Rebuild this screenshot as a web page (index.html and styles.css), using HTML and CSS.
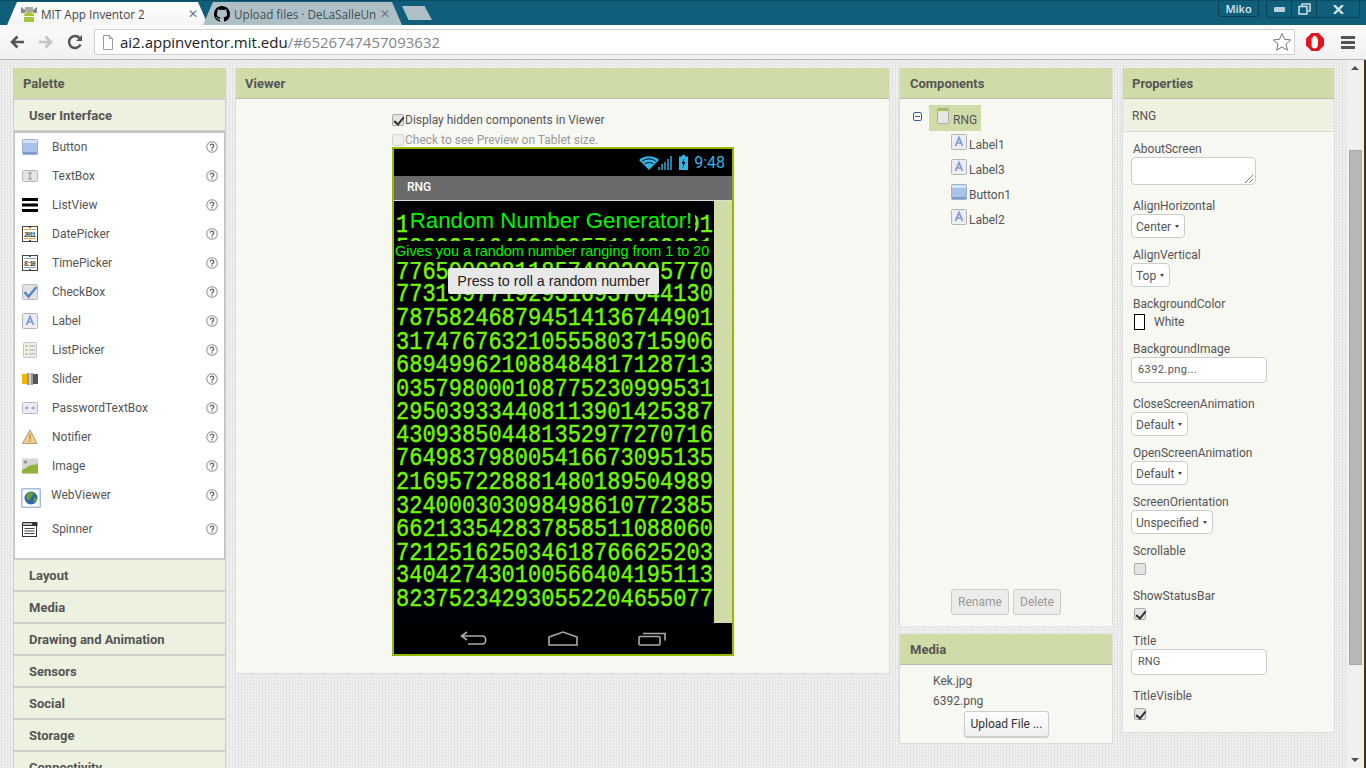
FILE: index.html
```html
<!DOCTYPE html>
<html lang="en">

<head>
    <meta charset="utf-8">
    <title>MIT App Inventor 2</title>
    <link rel="stylesheet" href="styles.css">
</head>

<body>
    <svg class="sprite" width="0" height="0">
        <symbol id="i-button" viewBox="0 0 16 16"><rect x=".5" y=".5" width="15" height="15" rx="1" fill="#a9c2e8" stroke="#9db0cc"/><path d="M1 1h14v3H1z" fill="#d5e2f5"/><path d="M1 13h14v2H1z" fill="#7d9ccd"/></symbol>
        <symbol id="i-textbox" viewBox="0 0 16 16"><rect x=".5" y="2.500" width="15" height="11" rx="1" fill="#e4e4e4" stroke="#b5b5b5"/><path d="M6 5h4M6 11h4M8 5v6" stroke="#7f93b8" fill="none"/></symbol>
        <symbol id="i-listview" viewBox="0 0 16 16"><path d="M0 1h16v3H0zM0 6.500h16v3H0zM0 12h16v3H0z"/></symbol>
        <symbol id="i-date" viewBox="0 0 16 16"><rect x=".5" y=".5" width="15" height="15" fill="#fff" stroke="#444"/><path d="M2 3.500h12M2 12.500h12" stroke="#e9a64c"/><path d="M7 1.500h2M7 14.500h2" stroke="#555"/><text x="8" y="10.500" font-family="Liberation Mono" font-size="6.500" font-weight="700" text-anchor="middle" textLength="12" fill="#444">2011</text></symbol>
        <symbol id="i-time" viewBox="0 0 16 16"><rect x=".5" y=".5" width="15" height="15" fill="#fff" stroke="#444"/><path d="M2 3.500h12M2 12.500h12" stroke="#7ba7d4"/><path d="M7 1.500h2M7 14.500h2" stroke="#555"/><text x="8" y="10.500" font-family="Liberation Mono" font-size="6.500" font-weight="700" text-anchor="middle" textLength="12" fill="#444">8:10</text></symbol>
        <symbol id="i-check" viewBox="0 0 16 16"><rect x=".5" y=".5" width="15" height="15" rx="1" fill="#e2e2e2" stroke="#bbb"/><path d="M2.500 8l4 4.500L14.500 3" fill="none" stroke="#5c86c6" stroke-width="2.600"/></symbol>
        <symbol id="i-label" viewBox="0 0 16 16"><rect x=".5" y=".5" width="15" height="15" rx="1" fill="#ececf2" stroke="#b5b5b5"/><path d="M4.500 12L8 3.500 11.500 12M5.800 9h4.400" fill="none" stroke="#7d9bd0" stroke-width="1.700"/></symbol>
        <symbol id="i-listpicker" viewBox="0 0 16 16"><rect x="1.500" y=".5" width="13" height="15" rx="1" fill="#eee" stroke="#c4c4c4"/><path d="M3.500 4h2M3.500 8h2M3.500 12h2" stroke="#a8c43c" stroke-width="1.500"/><path d="M7 4h6M7 8h6M7 12h6" stroke="#aaa"/></symbol>
        <symbol id="i-slider" viewBox="0 0 16 16"><path d="M0 3h5v10H0z" fill="#f2b400"/><path d="M11 3h5v10h-5z" fill="#555"/><path d="M5 2h6v12H5z" fill="#999"/><path d="M7 2h2v12H7z" fill="#ccc"/></symbol>
        <symbol id="i-password" viewBox="0 0 16 16"><rect x=".5" y="2.500" width="15" height="11" rx="1" fill="#ececf2" stroke="#b9b9b9"/><path d="M3 8h3.500M4.700 6.300v3.400M9.500 8H13M11.200 6.300v3.400" stroke="#7d9bd0"/></symbol>
        <symbol id="i-notifier" viewBox="0 0 16 16"><path d="M8 1l7 13.500H.5z" fill="#f3cd8b" stroke="#a99a7a"/><path d="M8 5v5.500M8 11.500v1.500" stroke="#c58b2f" stroke-width="1.500"/></symbol>
        <symbol id="i-image" viewBox="0 0 16 16"><rect width="16" height="15" y=".5" fill="#d6d6d6"/><circle cx="3.500" cy="4" r="1.500" fill="#888"/><path d="M0 12c4-1 6-5 10-5 3 0 4-1 6-2v10.500H0z" fill="#8fb339"/></symbol>
        <symbol id="i-web" viewBox="0 0 20 20"><rect x=".75" y=".75" width="18.500" height="18.500" rx="1" fill="#fff" stroke="#a3bde0" stroke-width="1.500"/><circle cx="10" cy="10" r="6.500" fill="#2c69a8"/><path d="M6 6c2-2 5-2 6-1s-1 3-2 4-1 4-3 3-2-4-1-6zM13 10c1-1 3 0 3 1s-2 3-3 3 0-3 0-4z" fill="#6ba32d"/></symbol>
        <symbol id="i-spinner" viewBox="0 0 16 16"><rect x=".5" y="4.500" width="14" height="11" fill="#fff" stroke="#333"/><path d="M.5 1.500h10v3H.5z" fill="#bbb" stroke="#333"/><path d="M10.500 1h5v4h-5z" fill="#2e3440"/><path d="M2.500 7.500h10M2.500 10h10M2.500 12.500h10" stroke="#444"/></symbol>
        <symbol id="i-help" viewBox="0 0 12 12"><circle cx="6" cy="6" r="5.250" fill="#fff" stroke="#b0b0b0" stroke-width="1.500"/><path d="M4.300 4.800c0-2.200 3.500-2.200 3.500 0 0 1.300-1.800 1.300-1.800 2.600M6 8.300v1.200" fill="none" stroke="#666" stroke-width="1.300"/></symbol>
        <symbol id="i-screen" viewBox="0 0 12 16"><rect x=".5" y=".5" width="11" height="15" rx="1" fill="#e6e6e6" stroke="#aaa"/><path d="M1 1h10v2H1z" fill="#a4c639"/></symbol>
    </svg>

    <div class="tabstrip">
        <div class="tab tab-active">
            <svg class="favicon" viewBox="0 0 16 16"><path d="M0 1l4 3v3H0z" fill="#888"/><path d="M16 1l-4 3v3h4z" fill="#888"/><path d="M4 1h8v5H4z" fill="#aaa"/><path d="M3 10c0-3 2-4 5-4s5 1 5 4z" fill="#a4c639"/><path d="M3 11h10v5H3z" fill="#a4c639"/></svg>
            <span class="tab-title">MIT App Inventor 2</span>
            <span class="tab-x">✕</span>
        </div>
        <div class="tab tab-other">
            <svg class="favicon" viewBox="0 0 16 16"><path d="M8 0C3.580 0 0 3.580 0 8c0 3.540 2.290 6.530 5.470 7.590.4.070.55-.17.55-.38 0-.19-.01-.82-.01-1.490-2.010.37-2.530-.49-2.690-.94-.09-.23-.48-.94-.82-1.130-.28-.15-.68-.52-.01-.53.63-.01 1.080.58 1.230.82.72 1.210 1.870.87 2.330.66.070-.52.28-.87.51-1.070-1.780-.2-3.640-.89-3.640-3.950 0-.87.31-1.590.82-2.150-.08-.2-.36-1.020.08-2.120 0 0 .67-.21 2.200.82.64-.18 1.320-.27 2-.27.68 0 1.360.09 2 .27 1.530-1.040 2.200-.82 2.200-.82.44 1.100.16 1.920.08 2.120.51.56.82 1.270.82 2.150 0 3.070-1.870 3.750-3.650 3.950.29.25.54.73.54 1.480 0 1.070-.01 1.930-.01 2.200 0 .21.15.46.55.38A8.013 8.013 0 0016 8c0-4.420-3.580-8-8-8z"/></svg>
            <span class="tab-title">Upload files · DeLaSalleUn</span>
            <span class="tab-x">✕</span>
        </div>
        <div class="tab-new"></div>
        <div class="window-controls">
            <div class="win-btn win-user">Miko</div>
            <div class="win-group">
                <div class="win-btn win-min"><svg width="11" height="5" viewBox="0 0 11 5"><rect width="11" height="5" rx="1" fill="#b9d0da"/></svg></div>
                <div class="win-btn win-max"><svg width="13" height="12" viewBox="0 0 13 12" fill="none" stroke="#c7dbe3" stroke-width="1.600"><path d="M4 3V1h8v7h-2"/><rect x="1" y="3.500" width="8" height="7.500"/></svg></div>
                <div class="win-btn win-close"><svg width="11" height="9" viewBox="0 0 11 9" stroke="#d5e4ea" stroke-width="2.400"><path d="M1 0l9 9M10 0L1 9"/></svg></div>
            </div>
        </div>
    </div>

    <div class="toolbar">
        <svg class="tool-icon" viewBox="0 0 16 16" fill="none" stroke="#555" stroke-width="2.600"><path d="M15 8H3M8.500 2.500L3 8l5.500 5.500"/></svg>
        <svg class="tool-icon" viewBox="0 0 16 16" fill="none" stroke="#c4c4c4" stroke-width="2.600"><path d="M1 8h12M7.500 2.500L13 8l-5.500 5.500"/></svg>
        <svg class="tool-icon" viewBox="0 0 16 16" fill="none" stroke="#555" stroke-width="2.500"><path d="M13.500 10.500A6 6 0 1 1 12.500 4"/><path d="M15 1v6H9z" fill="#555" stroke="none"/></svg>
        <div class="omnibox">
            <svg class="doc-icon" viewBox="0 0 12 15" fill="#fff" stroke="#999"><path d="M1.500.5h6l3 3v11h-9z"/><path d="M7.500.5v3h3" fill="none"/></svg>
            <span class="url"><b>ai2.appinventor.mit.edu</b>/#6526747457093632</span>
            <svg class="star" viewBox="0 0 20 20" fill="#fff" stroke="#777"><path d="M10 1.500l2.500 5.800 6.300.6-4.800 4.100 1.500 6.200L10 15l-5.500 3.200L6 12 1.200 7.900l6.300-.6z"/></svg>
        </div>
        <svg class="opera" viewBox="0 0 18 18"><path d="M5.500 0h7L18 5.500v7L12.500 18h-7L0 12.500v-7z" fill="#e3141c"/><path d="M5.500 6c0-1 1.200-1 1.200 0V4c0-1 1.300-1 1.300 0V3.300c0-1 1.400-1 1.400 0V4c0-1 1.300-1 1.300 0v2c0-1 1.200-1 1.200 0v6c0 2-1.500 3.500-3.400 3.500S5.500 14 5.500 12z" fill="#fff"/></svg>
        <svg class="menu-icon" viewBox="0 0 14 13" fill="#555"><path d="M0 0h14v3H0zM0 5h14v3H0zM0 10h14v3H0z"/></svg>
    </div>

    <div class="page">
        <div class="panels">
            <section class="panel palette">
                <h3 class="panel-head">Palette</h3>
                <div class="drawer">User Interface</div>
                <ul class="palette-list">
                    <li><svg class="pal-icon"><use href="#i-button"/></svg><span>Button</span><svg class="help"><use href="#i-help"/></svg></li>
                    <li><svg class="pal-icon"><use href="#i-textbox"/></svg><span>TextBox</span><svg class="help"><use href="#i-help"/></svg></li>
                    <li><svg class="pal-icon"><use href="#i-listview"/></svg><span>ListView</span><svg class="help"><use href="#i-help"/></svg></li>
                    <li><svg class="pal-icon"><use href="#i-date"/></svg><span>DatePicker</span><svg class="help"><use href="#i-help"/></svg></li>
                    <li><svg class="pal-icon"><use href="#i-time"/></svg><span>TimePicker</span><svg class="help"><use href="#i-help"/></svg></li>
                    <li><svg class="pal-icon"><use href="#i-check"/></svg><span>CheckBox</span><svg class="help"><use href="#i-help"/></svg></li>
                    <li><svg class="pal-icon"><use href="#i-label"/></svg><span>Label</span><svg class="help"><use href="#i-help"/></svg></li>
                    <li><svg class="pal-icon"><use href="#i-listpicker"/></svg><span>ListPicker</span><svg class="help"><use href="#i-help"/></svg></li>
                    <li><svg class="pal-icon"><use href="#i-slider"/></svg><span>Slider</span><svg class="help"><use href="#i-help"/></svg></li>
                    <li><svg class="pal-icon"><use href="#i-password"/></svg><span>PasswordTextBox</span><svg class="help"><use href="#i-help"/></svg></li>
                    <li><svg class="pal-icon"><use href="#i-notifier"/></svg><span>Notifier</span><svg class="help"><use href="#i-help"/></svg></li>
                    <li><svg class="pal-icon"><use href="#i-image"/></svg><span>Image</span><svg class="help"><use href="#i-help"/></svg></li>
                    <li class="row-web"><svg class="pal-icon-big"><use href="#i-web"/></svg><span>WebViewer</span><svg class="help"><use href="#i-help"/></svg></li>
                    <li class="row-spinner"><svg class="pal-icon"><use href="#i-spinner"/></svg><span>Spinner</span><svg class="help"><use href="#i-help"/></svg></li>
                </ul>
                <div class="drawer">Layout</div>
                <div class="drawer">Media</div>
                <div class="drawer">Drawing and Animation</div>
                <div class="drawer">Sensors</div>
                <div class="drawer">Social</div>
                <div class="drawer">Storage</div>
                <div class="drawer">Connectivity</div>
            </section>

            <section class="panel viewer">
                <h3 class="panel-head">Viewer</h3>
                <div class="viewer-body">
                    <div class="viewer-check"><span class="checkbox is-on"></span>Display hidden components in Viewer</div>
                    <div class="viewer-check is-off"><span class="checkbox"></span>Check to see Preview on Tablet size.</div>
                    <div class="phone">
                        <div class="status-bar">
                            <svg class="status-wifi" viewBox="0 0 20 14"><path d="M10 14L0 4c5.500-5 14.500-5 20 0z" fill="#33b5e5"/><path d="M3 5.500c4-3.500 10-3.500 14 0M5.500 8c2.500-2 6.500-2 9 0" stroke="#000" fill="none"/></svg>
                            <svg class="status-signal" viewBox="0 0 14 14" fill="#2a7f9f"><path d="M0 11h2v3H0zM3 8h2v6H3zM6 6h2v8H6zM9 3h2v11H9zM12 0h2v14h-2z"/></svg>
                            <svg class="status-batt" viewBox="0 0 9 15"><path d="M3 0h3v1.500h3V15H0V1.500h3z" fill="#33b5e5"/><path d="M5.500 3L2.500 8.500h2L3.500 13l3-6h-2z" fill="#000"/></svg>
                            <span class="status-time">9:48</span>
                        </div>
                        <div class="phone-title">RNG</div>
                        <div class="screen">
                            <div class="digits">
                                <div class="digit-rows">
                                    <div>106421857390426815037291</div>
                                    <div>593027164830295716482091</div>
                                    <div>776590028118574802005770</div>
                                    <div>773159771929316937044130</div>
                                    <div>787582468794514136744901</div>
                                    <div>317476763210555803715906</div>
                                    <div>689499621088484817128713</div>
                                    <div>035798000108775230999531</div>
                                    <div>295039334408113901425387</div>
                                    <div>430938504481352977270716</div>
                                    <div>764983798005416673095135</div>
                                    <div>216957228881480189504989</div>
                                    <div>324000303098498610772385</div>
                                    <div>662133542837858511088060</div>
                                    <div>721251625034618766625203</div>
                                    <div>340427430100566404195113</div>
                                    <div>823752342930552204655077</div>
                                </div>
                            </div>
                            <div class="screen-side"></div>
                            <div class="app-title">Random Number Generator!</div>
                            <div class="app-sub">Gives you a random number ranging from 1 to 20</div>
                            <div class="app-button">Press to roll a random number</div>
                        </div>
                        <div class="phone-nav">
                            <svg width="28" height="15" viewBox="0 0 28 15" fill="none" stroke="#aaa" stroke-width="1.600"><path d="M7 1L1.500 5 7 9M1.500 5H22c5 0 5 8 0 8H8"/></svg>
                            <svg width="30" height="15" viewBox="0 0 30 15" fill="none" stroke="#aaa" stroke-width="1.600"><path d="M1 6l14-5 14 5v8H1z"/></svg>
                            <svg width="28" height="15" viewBox="0 0 28 15" fill="none" stroke="#aaa" stroke-width="1.600"><rect x="1" y="5.500" width="21" height="8.500" rx="1"/><path d="M5 2.500h22v7"/></svg>
                        </div>
                    </div>
                </div>
            </section>

            <div class="stack">
                <section class="panel components">
                    <h3 class="panel-head">Components</h3>
                    <div class="components-body">
                        <div class="tree-root">
                            <svg class="tree-minus" viewBox="0 0 9 9" fill="#fff" stroke="#3d55a5"><rect x=".5" y=".5" width="8" height="8" rx="1.500"/><path d="M2 4.500h5"/></svg>
                            <div class="tree-selected"><svg class="tree-screen"><use href="#i-screen"/></svg><span>RNG</span></div>
                        </div>
                        <ul class="tree-list">
                            <li><svg class="tree-icon"><use href="#i-label"/></svg><span>Label1</span></li>
                            <li><svg class="tree-icon"><use href="#i-label"/></svg><span>Label3</span></li>
                            <li><svg class="tree-icon"><use href="#i-button"/></svg><span>Button1</span></li>
                            <li><svg class="tree-icon"><use href="#i-label"/></svg><span>Label2</span></li>
                        </ul>
                        <div class="tree-actions">
                            <span class="btn is-disabled btn-rename">Rename</span>
                            <span class="btn is-disabled btn-delete">Delete</span>
                        </div>
                    </div>
                </section>
                <section class="panel media">
                    <h3 class="panel-head">Media</h3>
                    <div class="media-body">
                        <div class="media-file">Kek.jpg</div>
                        <div class="media-file">6392.png</div>
                        <span class="btn btn-upload">Upload File ...</span>
                    </div>
                </section>
            </div>

            <section class="panel properties">
                <h3 class="panel-head">Properties</h3>
                <div class="props-target">RNG</div>
                <div class="props-body">
                    <div class="prop prop-tall">
                        <div class="prop-name">AboutScreen</div>
                        <div class="textarea"><svg width="8" height="8" viewBox="0 0 8 8" stroke="#777"><path d="M0 8l8-8M4 8l4-4"/></svg></div>
                    </div>
                    <div class="prop">
                        <div class="prop-name">AlignHorizontal</div>
                        <div class="select">Center<i class="caret"></i></div>
                    </div>
                    <div class="prop">
                        <div class="prop-name">AlignVertical</div>
                        <div class="select">Top<i class="caret"></i></div>
                    </div>
                    <div class="prop prop-color">
                        <div class="prop-name">BackgroundColor</div>
                        <div class="color-row"><span class="swatch"></span>White</div>
                    </div>
                    <div class="prop prop-tall">
                        <div class="prop-name">BackgroundImage</div>
                        <div class="text-input is-spaced">6392.png...</div>
                    </div>
                    <div class="prop">
                        <div class="prop-name">CloseScreenAnimation</div>
                        <div class="select">Default<i class="caret"></i></div>
                    </div>
                    <div class="prop">
                        <div class="prop-name">OpenScreenAnimation</div>
                        <div class="select">Default<i class="caret"></i></div>
                    </div>
                    <div class="prop">
                        <div class="prop-name">ScreenOrientation</div>
                        <div class="select">Unspecified<i class="caret"></i></div>
                    </div>
                    <div class="prop prop-tall">
                        <div class="prop-name">Scrollable</div>
                        <span class="checkbox prop-check"></span>
                    </div>
                    <div class="prop prop-tall">
                        <div class="prop-name">ShowStatusBar</div>
                        <span class="checkbox prop-check is-on"></span>
                    </div>
                    <div class="prop prop-tall">
                        <div class="prop-name">Title</div>
                        <div class="text-input">RNG</div>
                    </div>
                    <div class="prop">
                        <div class="prop-name">TitleVisible</div>
                        <span class="checkbox prop-check is-on"></span>
                    </div>
                </div>
            </section>
        </div>

        <div class="scrollbar">
            <i class="arrow-up"></i>
            <div class="thumb"></div>
            <i class="arrow-down"></i>
        </div>
    </div>
</body>

</html>
```

FILE: styles.css
```css
* {
    box-sizing: border-box;
}

body {
    margin: 0;
    width: 1366px;
    height: 768px;
    overflow: hidden;
    display: flex;
    flex-direction: column;
    font-family: Roboto, "Liberation Sans", sans-serif;
    font-size: 12px;
    color: #555;
    background-color: #e9e9e9;
}

ul {
    list-style: none;
    margin: 0;
    padding: 0;
}

.sprite {
    position: absolute;
}

/* browser chrome */
.tabstrip {
    height: 25px;
    flex: none;
    display: flex;
    align-items: flex-end;
    padding-left: 7px;
    background-color: #0f5f7a;
    border-top: 1px solid #0b4c63;
}

.tab {
    height: 23px;
    display: flex;
    align-items: center;
    font-family: "Open Sans", sans-serif;
    font-size: 11.700px;
    clip-path: polygon(0 100%, 10px 0, calc(100% - 10px) 0, 100% 100%);
}

.tab-active {
    width: 201px;
    padding: 0 10px 0 14px;
    color: #444;
    background: linear-gradient(#fff, #f4f4f4);
}

.tab-other {
    width: 199px;
    margin-left: -5px;
    padding: 0 12px 0 11px;
    color: #3f4f55;
    background-color: #aebfc6;
}

.favicon {
    width: 16px;
    height: 16px;
    flex: none;
    margin-right: 4px;
}

.tab-title {
    flex: 1;
    white-space: nowrap;
    overflow: hidden;
}

.tab-x {
    margin-left: 4px;
    font-size: 12px;
    color: #6d7a80;
}

.tab-new {
    width: 30px;
    height: 14px;
    margin: 0 0 5px 0;
    background-color: #aebfc6;
    clip-path: polygon(0 0, 75% 0, 100% 100%, 22% 100%);
}

.window-controls {
    margin-left: auto;
    align-self: flex-start;
    display: flex;
    gap: 7px;
    padding-right: 6px;
}

.win-btn {
    height: 16px;
    display: flex;
    align-items: center;
    justify-content: center;
}

.win-user {
    width: 41px;
    border: 1px solid #0a3e52;
    border-top: 0;
    border-radius: 0 0 4px 4px;
    font-family: "Open Sans", sans-serif;
    font-size: 11px;
    font-weight: 600;
    color: #dfe9ed;
}

.win-group {
    display: flex;
    border: 1px solid #0a3e52;
    border-top: 0;
    border-radius: 0 0 4px 4px;
}

.win-min {
    width: 25px;
    border-right: 1px solid #0a3e52;
}

.win-max {
    width: 25px;
    border-right: 1px solid #0a3e52;
}

.win-close {
    width: 42px;
}

.toolbar {
    height: 35px;
    flex: none;
    display: flex;
    align-items: center;
    padding-left: 9px;
    background: linear-gradient(#fafafa, #f1f1f1);
    border-bottom: 1px solid #b8b8b8;
}

.tool-icon {
    width: 16px;
    height: 16px;
    margin-right: 13px;
}

.omnibox {
    width: 1201px;
    height: 26px;
    margin-left: -2px;
    display: flex;
    align-items: center;
    padding: 0 2px 0 7px;
    background-color: #fff;
    border: 1px solid #cfcfcf;
    border-radius: 2px;
}

.doc-icon {
    width: 12px;
    height: 15px;
    margin-right: 6px;
}

.url {
    flex: 1;
    font-family: "Open Sans", sans-serif;
    font-size: 15px;
    color: #858585;
}

.url b {
    font-weight: 400;
    color: #222;
}

.star {
    width: 20px;
    height: 20px;
}

.opera {
    width: 18px;
    height: 18px;
    margin-left: 11px;
}

.menu-icon {
    width: 14px;
    height: 13px;
    margin-left: 17px;
}

/* page */
.page {
    flex: 1;
    display: flex;
    min-height: 0;
    overflow: hidden;
    background: repeating-conic-gradient(#e3e3e3 0 25%, #f3f3f3 0 50%) 0 0 / 3px 3px;
}

.panels {
    display: grid;
    grid-template-columns: 213px 655px 214px 213px;
    column-gap: 9px;
    align-items: start;
    padding: 8px 0 0 13px;
}

.panel {
    background-color: #f7f8f2;
    border: 1px solid #dcdcdc;
    border-top: 0;
}

.panel-head {
    height: 31px;
    margin: 0;
    padding-left: 10px;
    font-size: 13px;
    font-weight: 700;
    line-height: 32px;
    color: #555;
    background-color: #cfdca8;
    border-bottom: 1px solid #bcbcb0;
}

.palette {
    background-color: #edf1e0;
    border-color: #cfcfcf;
}

.palette .panel-head,
.viewer .panel-head {
    padding-left: 9px;
}

.properties .panel-head {
    padding-left: 9px;
}

.palette .panel-head {
    border-bottom: 2px solid #cfcfcf;
    height: 32px;
}

.drawer {
    height: 32px;
    padding-left: 15px;
    font-size: 13px;
    font-weight: 700;
    line-height: 31px;
    background-color: #edf1e0;
    border-bottom: 2px solid #cfcfcf;
}

.palette-list {
    height: 429px;
    background-color: #fff;
    border: 1px solid #c4c4c4;
    border-top-width: 2px;
    border-bottom: 2px solid #cfcfcf;
    margin-top: -1px;
}

.palette-list li {
    height: 29px;
    display: flex;
    align-items: center;
    padding: 0 6px 0 7px;
}

.palette-list li:first-child {
    margin-top: -1px;
}

.palette-list .row-spinner {
    height: 39px;
}

.pal-icon {
    width: 16px;
    height: 16px;
    flex: none;
    margin-right: 14px;
}

.pal-icon-big {
    width: 20px;
    height: 20px;
    flex: none;
    margin: 6px 10px 0 -1px;
}

.palette-list span {
    flex: 1;
}

.help {
    width: 12px;
    height: 12px;
    flex: none;
}

/* viewer */
.viewer {
    height: 606px;
}

.viewer-body {
    padding: 11px 0 0 156px;
}

.viewer-check {
    height: 20px;
    display: flex;
    align-items: center;
    gap: 1px;
    font-size: 12px;
    color: #555;
}

.viewer-check.is-off {
    color: #9a9a9a;
}

.viewer-check.is-off .checkbox {
    opacity: .45;
}

.checkbox {
    position: relative;
    width: 12px;
    height: 12px;
    flex: none;
    display: block;
    background-color: #e4e4e4;
    border: 1px solid #a9a9a9;
    border-radius: 2px;
}

.checkbox.is-on::after {
    content: "";
    position: absolute;
    left: 3px;
    top: 0;
    width: 4px;
    height: 8px;
    border: solid #333;
    border-width: 0 2px 2px 0;
    transform: rotate(40deg);
}

.phone {
    width: 342px;
    margin-top: -3px;
    background-color: #000;
    border: 2px solid #94ba00;
}

.status-bar {
    height: 27px;
    display: flex;
    align-items: center;
    justify-content: flex-end;
    padding-right: 7px;
    background-color: #000;
}

.status-wifi {
    width: 20px;
    height: 14px;
}

.status-signal {
    width: 14px;
    height: 14px;
    margin-left: -1px;
}

.status-batt {
    width: 9px;
    height: 15px;
    margin-left: 7px;
}

.status-time {
    margin-left: 6px;
    font-size: 16px;
    color: #33b5e5;
}

.phone-title {
    height: 25px;
    padding-left: 13px;
    font-size: 12px;
    font-weight: 500;
    line-height: 23px;
    color: #fff;
    background-color: #6a6a6a;
    border-bottom: 1px solid #ddd;
}

.screen {
    position: relative;
    height: 422px;
    display: flex;
}

.digits {
    width: 320px;
    padding: 13px 0 0 2px;
    overflow: hidden;
    background-color: #000008;
}

/* the picture's digits are taller than any installed mono face */
.digit-rows {
    font-family: "Liberation Mono", monospace;
    font-size: 22px;
    line-height: 19.830px;
    white-space: nowrap;
    color: #70f800;
    -webkit-text-stroke: .4px #70f800;
    transform: scaleY(1.180);
    transform-origin: top left;
}

.screen-side {
    flex: 1;
    background-color: #d0dca8;
}

.app-title {
    position: absolute;
    left: 13px;
    top: 0;
    width: 288px;
    height: 37px;
    font-family: "Liberation Sans", sans-serif;
    font-size: 22.300px;
    line-height: 39px;
    text-align: center;
    white-space: nowrap;
    color: #00f500;
    background-color: #000;
}

.app-sub {
    position: absolute;
    left: 0;
    top: 40px;
    width: 320px;
    height: 21px;
    padding-left: 1px;
    font-family: "Liberation Sans", sans-serif;
    font-size: 14.400px;
    line-height: 21px;
    white-space: nowrap;
    color: #00f500;
    background-color: #000;
}

.app-button {
    position: absolute;
    left: 54px;
    top: 67px;
    width: 211px;
    height: 26px;
    font-family: "Liberation Sans", sans-serif;
    font-size: 14.300px;
    line-height: 26px;
    text-align: center;
    white-space: nowrap;
    color: #222;
    background-color: #e8e8e8;
    border-radius: 2px;
}

.phone-nav {
    height: 31px;
    display: flex;
    align-items: center;
    justify-content: center;
    gap: 60px;
    background-color: #000;
}

/* components + media */
.stack {
    display: flex;
    flex-direction: column;
    gap: 8px;
}

.components {
    height: 558px;
}

.components-body {
    height: 527px;
    display: flex;
    flex-direction: column;
    padding: 6px 0 0 13px;
    background-color: #f7f8f2;
}

.tree-root {
    display: flex;
    align-items: flex-start;
}

.tree-minus {
    width: 9px;
    height: 9px;
    margin-top: 7px;
    flex: none;
}

.tree-selected {
    width: 52px;
    height: 26px;
    margin-left: 7px;
    display: flex;
    padding: 3px 0 0 8px;
    background-color: #cfdca8;
}

.tree-selected span {
    margin: 5px 0 0 4px;
}

.tree-screen {
    width: 12px;
    height: 16px;
    flex: none;
}

.tree-list {
    padding-left: 38px;
}

.tree-list li {
    height: 25px;
    display: flex;
    align-items: flex-start;
    padding-top: 1px;
}

.tree-icon {
    width: 16px;
    height: 16px;
    flex: none;
    margin-top: 2px;
}

.tree-list span {
    margin: 6px 0 0 2px;
}

.tree-actions {
    margin-top: auto;
    display: flex;
    justify-content: center;
    gap: 4px;
    padding: 0 24px 11px 11px;
}

.btn {
    height: 26px;
    display: flex;
    align-items: center;
    justify-content: center;
    background-color: #f4f4f4;
    border: 1px solid #ccc;
    border-radius: 3px;
    box-shadow: 0 1px 1px #ccc;
}

.btn.is-disabled {
    color: #999;
    background-color: #ececea;
    box-shadow: none;
}

.btn-rename {
    width: 58px;
}

.btn-delete {
    width: 48px;
}

.media {
    height: 110px;
}

.media-body {
    padding: 6px 0 0 33px;
}

.media-file {
    height: 20px;
    line-height: 20px;
}

.btn-upload {
    width: 85px;
    margin: 0 0 0 31px;
    color: #333;
    background: linear-gradient(#fff, #eee);
}

/* properties */
.properties {
    height: 665px;
}

.props-target {
    height: 33px;
    padding-left: 9px;
    line-height: 35px;
    background-color: #edf1e0;
    border-bottom: 1px solid #dcdcdc;
}

.props-body {
    padding: 9px 0 0 8px;
}

.prop {
    margin-bottom: 9px;
}

.prop-tall {
    margin-bottom: 13px;
}

.prop-color {
    margin-bottom: 11px;
}

.prop-name {
    height: 16px;
    margin-left: 2px;
    line-height: 16px;
}

.textarea {
    width: 125px;
    height: 28px;
    display: flex;
    align-items: flex-end;
    justify-content: flex-end;
    padding: 0 2px 1px 0;
    background-color: #fff;
    border: 1px solid #ccc;
    border-radius: 4px;
}

.select {
    width: max-content;
    height: 24px;
    display: flex;
    align-items: center;
    gap: 4px;
    padding: 1px 5px 0 4px;
    background-color: #fff;
    border: 1px solid #ccc;
    border-radius: 4px;
}

.caret {
    width: 0;
    height: 0;
    border: 2.500px solid transparent;
    border-top: 3px solid #444;
    border-bottom: 0;
}

.color-row {
    display: flex;
    align-items: center;
    height: 16px;
    margin-top: 2px;
}

.swatch {
    width: 11px;
    height: 16px;
    margin: 0 9px 0 3px;
    background-color: #fff;
    border: 1px solid #000;
}

.text-input {
    width: 136px;
    height: 26px;
    padding-left: 6px;
    font-size: 11px;
    line-height: 24px;
    background-color: #fff;
    border: 1px solid #ccc;
    border-radius: 4px;
}

.text-input.is-spaced {
    letter-spacing: .4px;
}

.prop-check {
    margin: 4px 0 0 3px;
}

/* page scrollbar */
.scrollbar {
    position: relative;
    width: 17px;
    height: 100%;
    margin-left: 12px;
    background-color: #f0f0f0;
}

.thumb {
    position: absolute;
    left: 2px;
    top: 90px;
    width: 13px;
    height: 515px;
    background-color: #b7b7b7;
    border: 1px solid #a8a8a8;
}

.arrow-up,
.arrow-down {
    position: absolute;
    left: 4px;
    border: 4px solid transparent;
    border-left-width: 4.500px;
    border-right-width: 4.500px;
}

.arrow-up {
    top: 6px;
    border-top: 0;
    border-bottom: 4px solid #505050;
}

.arrow-down {
    bottom: 6px;
    border-bottom: 0;
    border-top: 4px solid #505050;
}

.page::after {
    content: "";
    width: 2px;
    flex: none;
    background-color: #4b3208;
}
```
